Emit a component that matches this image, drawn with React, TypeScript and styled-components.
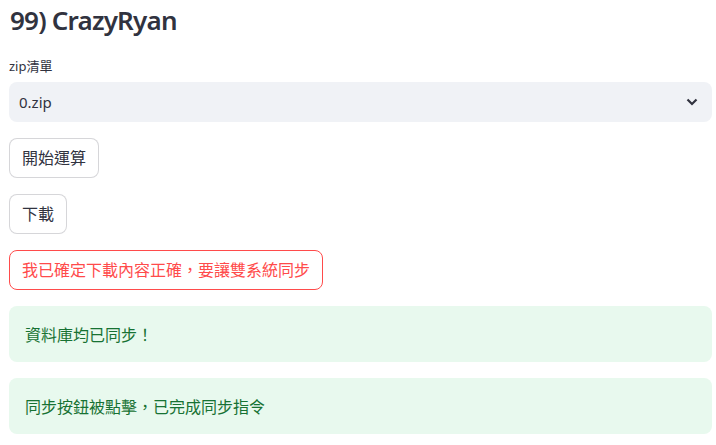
import React from 'react'
import styled, { createGlobalStyle } from 'styled-components'

const GlobalStyle = createGlobalStyle`
  body {
    margin: 0;
    background: #ffffff;
    color: #31333f;
    font-family: "Noto Sans", "Noto Sans CJK TC", sans-serif;
  }
`

const Main = styled.div`
  display: flex;
  flex-direction: column;
  gap: 16px;
  padding: 0 4px 0 9px;
`

const Title = styled.h3`
  margin: 0;
  padding: 5px 0 0 1px;
  font-size: 26px;
  font-weight: 600;
  line-height: 31px;
  letter-spacing: -0.8px;
  color: #31333f;
`

const Field = styled.div`
  display: flex;
  flex-direction: column;
  margin-top: 4px;
`

const Label = styled.label`
  font-size: 13px;
  line-height: 20px;
  margin-bottom: 6px;
  color: #31333f;
`

const Select = styled.div`
  display: flex;
  align-items: center;
  justify-content: space-between;
  height: 40px;
  padding: 0 14px 0 10px;
  border-radius: 8px;
  background: #f0f2f6;
  font-size: 15px;
  box-sizing: border-box;
`

const Button = styled.button<{ $danger?: boolean }>`
  align-self: flex-start;
  height: 40px;
  padding: 0 12px;
  border-radius: 8px;
  background: #ffffff;
  border: 1px solid ${p => (p.$danger ? '#ff4b4b' : 'rgba(49, 51, 63, 0.2)')};
  color: ${p => (p.$danger ? '#ff4b4b' : '#31333f')};
  font-family: "Noto Sans", "Noto Sans CJK TC", sans-serif;
  font-size: 16px;
  line-height: 24px;
  cursor: pointer;
`

const Alert = styled.div`
  display: flex;
  align-items: center;
  height: 56px;
  padding: 0 16px;
  border-radius: 8px;
  background: #e8f9ee;
  color: #177233;
  font-size: 16px;
  box-sizing: border-box;
`

const Chevron = () => (
  <svg width="12" height="8" viewBox="0 0 12 8">
    <path d="M1.5 1.5 L6 6 L10.5 1.5" fill="none" stroke="#31333f" strokeWidth="2.2" />
  </svg>
)

const App: React.FC = () => {
  return (
    <>
      <GlobalStyle />
      <Main>
        <Title>99) CrazyRyan</Title>
        <Field>
          <Label>zip清單</Label>
          <Select>
            <span>0.zip</span>
            <Chevron />
          </Select>
        </Field>
        <Button>開始運算</Button>
        <Button>下載</Button>
        <Button $danger>我已確定下載內容正確，要讓雙系統同步</Button>
        <Alert>資料庫均已同步！</Alert>
        <Alert>同步按鈕被點擊，已完成同步指令</Alert>
      </Main>
    </>
  )
}

export default App
